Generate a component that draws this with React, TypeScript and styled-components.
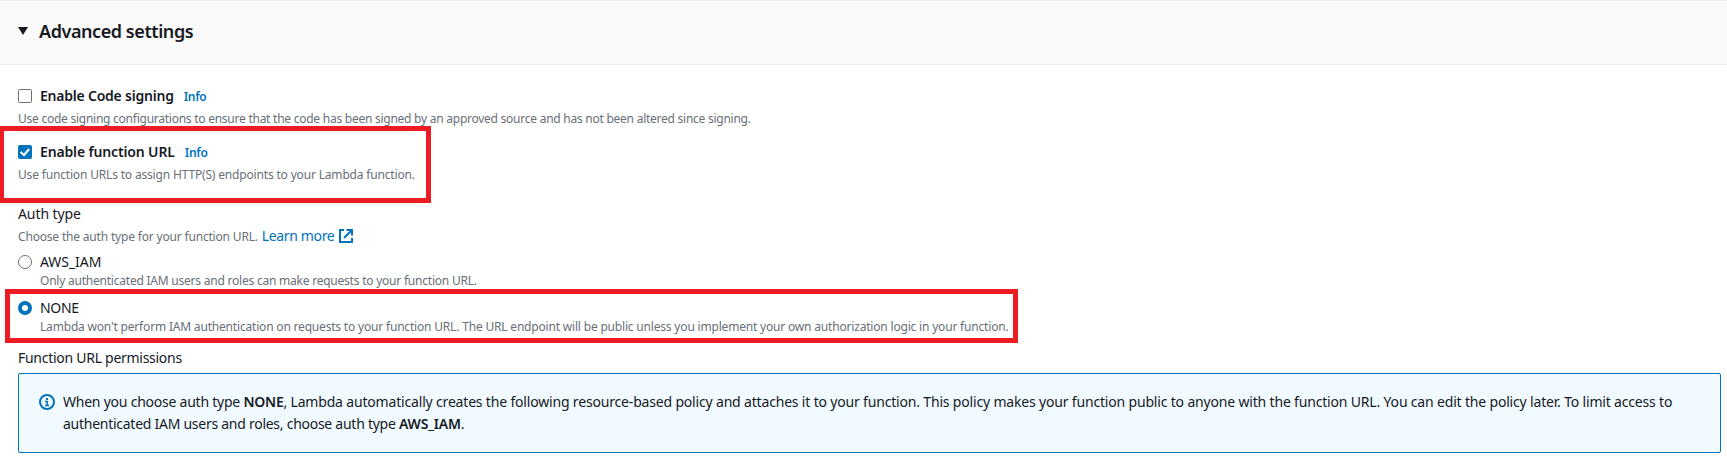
import React from 'react';
import styled, { createGlobalStyle } from 'styled-components';

const GlobalStyle = createGlobalStyle`
  * { box-sizing: border-box; }
  body {
    margin: 0;
    background: #fff;
    color: #16191f;
    font-family: 'Noto Sans', 'Open Sans', sans-serif;
    font-size: 14px;
    line-height: 22px;
    overflow: hidden;
  }
`;

const Page = styled.main`
  display: flex;
  flex-direction: column;
  height: 457px;
`;

const Header = styled.header`
  display: flex;
  align-items: center;
  gap: 11px;
  height: 65px;
  padding: 0 18px 4px;
  background: #fafafa;
  border-top: 1px solid #eaeded;
  border-bottom: 1px solid #eaeded;
`;

const Title = styled.h2`
  margin: 0;
  font-size: 18px;
  font-weight: 600;
  line-height: 22px;
  letter-spacing: -0.43px;
`;

const Content = styled.section`
  display: flex;
  flex-direction: column;
  padding: 20px 6px 0 18px;
`;

const Field = styled.div<{ $space: number }>`
  position: relative;
  display: flex;
  flex-direction: column;
  margin-bottom: ${(p) => p.$space}px;
`;

const Row = styled.div`
  display: flex;
  align-items: center;
  height: 22px;
`;

const Control = styled.span`
  display: flex;
  width: 14px;
  height: 14px;
  margin-right: 8px;
`;

const Text = styled.span<{ $track?: number; $bold?: boolean }>`
  white-space: nowrap;
  font-weight: ${(p) => (p.$bold ? 600 : 400)};
  letter-spacing: ${(p) => p.$track ?? 0}px;
`;

const Info = styled.a`
  margin-left: 10px;
  padding-top: 1px;
  color: #0073bb;
  font-size: 12px;
  font-weight: 600;
  letter-spacing: -0.3px;
`;

const Hint = styled.div<{ $track?: number; $indent?: number; $gap?: number }>`
  margin-top: ${(p) => p.$gap ?? 4}px;
  padding-left: ${(p) => p.$indent ?? 0}px;
  color: #687078;
  font-size: 12px;
  line-height: 16px;
  white-space: nowrap;
  letter-spacing: ${(p) => p.$track ?? 0}px;
`;

const InlineHint = styled.span<{ $track: number }>`
  padding-top: 1px;
  color: #687078;
  font-size: 12px;
  white-space: nowrap;
  letter-spacing: ${(p) => p.$track}px;
`;

const Link = styled.a`
  display: flex;
  align-items: center;
  gap: 5px;
  margin-left: 4px;
  color: #0073bb;
`;

const Highlight = styled.div<{ $x: number; $y: number; $w: number; $h: number }>`
  position: absolute;
  left: ${(p) => p.$x}px;
  top: ${(p) => p.$y}px;
  width: ${(p) => p.$w}px;
  height: ${(p) => p.$h}px;
  border: 5px solid #ed1c24;
  pointer-events: none;
`;

const Alert = styled.div`
  display: flex;
  height: 80px;
  margin-top: 4px;
  padding: 17px 20px;
  gap: 8px;
  background: #f1faff;
  border: 1px solid #0073bb;
  border-radius: 2px;
`;

const AlertIcon = styled.span`
  display: flex;
  padding-top: 3px;
`;

const AlertBody = styled.div`
  display: flex;
  flex-direction: column;
`;

const Caret = () => (
  <svg width="10" height="8" viewBox="0 0 10 8">
    <path d="M0 0H10L5 8Z" fill="#16191f" />
  </svg>
);

const Checkbox = ({ checked = false }: { checked?: boolean }) => (
  <svg width="14" height="14" viewBox="0 0 14 14">
    <rect x=".5" y=".5" width="13" height="13" rx="1" fill={checked ? '#0073bb' : '#fff'} stroke={checked ? '#0073bb' : '#687078'} />
    {checked && <path d="M2.5 7L6 10L11.2 4" fill="none" stroke="#fff" strokeWidth="2" />}
  </svg>
);

const Radio = ({ checked = false }: { checked?: boolean }) => (
  <svg width="14" height="14" viewBox="0 0 14 14">
    {checked ? (
      <circle cx="7" cy="7" r="5" fill="#fff" stroke="#0073bb" strokeWidth="4" />
    ) : (
      <circle cx="7" cy="7" r="6.5" fill="#fff" stroke="#687078" />
    )}
  </svg>
);

const ExternalIcon = () => (
  <svg width="14" height="14" viewBox="0 0 14 14" fill="none" stroke="#0073bb" strokeWidth="2">
    <path d="M5 1H1V13H13V9" />
    <path d="M7.5 1H13V6.5M13 1L5 9" />
  </svg>
);

const InfoIcon = () => (
  <svg width="16" height="16" viewBox="0 0 16 16" fill="none" stroke="#0073bb">
    <circle cx="8" cy="8" r="7" strokeWidth="2" />
    <path d="M8 4V6" strokeWidth="2" />
    <path d="M6 7.5H8.2V11.5M6 11.5H10" strokeWidth="1.5" />
  </svg>
);

export default function App() {
  return (
    <Page>
      <GlobalStyle />
      <Header>
        <Caret />
        <Title>Advanced settings</Title>
      </Header>
      <Content>
        <Field $space={14}>
          <Row>
            <Control><Checkbox /></Control>
            <Text $bold $track={-0.22}>Enable Code signing</Text>
            <Info>Info</Info>
          </Row>
          <Hint $track={-0.25}>Use code signing configurations to ensure that the code has been signed by an approved source and has not been altered since signing.</Hint>
        </Field>
        <Field $space={20}>
          <Row>
            <Control><Checkbox checked /></Control>
            <Text $bold $track={-0.145}>Enable function URL</Text>
            <Info>Info</Info>
          </Row>
          <Hint $track={-0.17}>Use function URLs to assign HTTP(S) endpoints to your Lambda function.</Hint>
          <Highlight $x={-19} $y={-15} $w={432} $h={77} />
        </Field>
        <Field $space={4}>
          <Row><Text $track={-0.08}>Auth type</Text></Row>
          <Row>
            <InlineHint $track={-0.18}>Choose the auth type for your function URL.</InlineHint>
            <Link><Text $track={-0.36}>Learn more</Text><ExternalIcon /></Link>
          </Row>
        </Field>
        <Field $space={8}>
          <Row>
            <Control><Radio /></Control>
            <Text $track={-0.05}>AWS_IAM</Text>
          </Row>
          <Hint $gap={0} $indent={22} $track={-0.223}>Only authenticated IAM users and roles can make requests to your function URL.</Hint>
        </Field>
        <Field $space={12}>
          <Row>
            <Control><Radio checked /></Control>
            <Text $track={-0.3}>NONE</Text>
          </Row>
          <Hint $gap={0} $indent={22} $track={-0.186}>Lambda won't perform IAM authentication on requests to your function URL. The URL endpoint will be public unless you implement your own authorization logic in your function.</Hint>
          <Highlight $x={-13} $y={-8} $w={1013} $h={54} />
        </Field>
        <Row><Text $track={-0.275}>Function URL permissions</Text></Row>
        <Alert>
          <AlertIcon><InfoIcon /></AlertIcon>
          <AlertBody>
            <Text $track={-0.176}>
              <Text $track={-0.235}>When you choose auth type </Text>
              <Text $bold $track={-0.25}>NONE</Text>, Lambda automatically creates the following resource-based policy and attaches it to your function. This policy makes your function public to anyone with the function URL. You can edit the policy later. To limit access to
            </Text>
            <Text $track={-0.265}>
              authenticated IAM users and roles, choose auth type <Text $bold $track={-0.22}>AWS_IAM</Text>.
            </Text>
          </AlertBody>
        </Alert>
      </Content>
    </Page>
  );
}
